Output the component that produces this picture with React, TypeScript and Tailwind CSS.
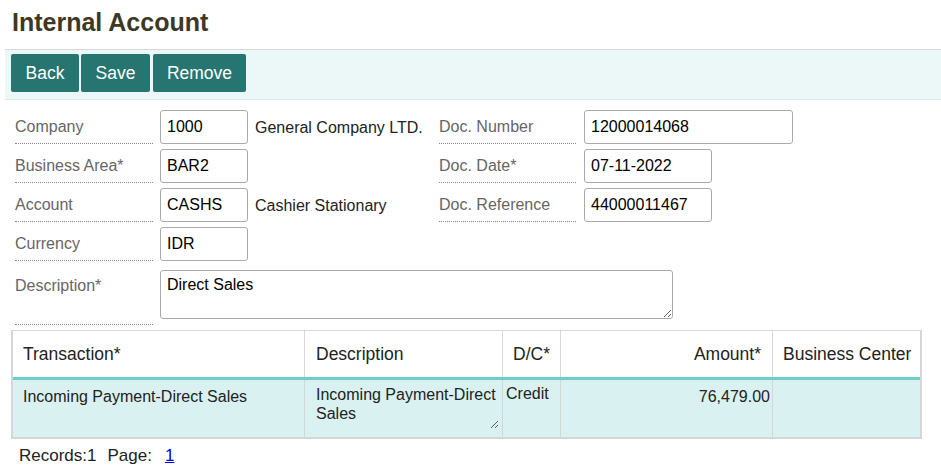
import React from 'react';

const labelCls =
  'flex items-center w-[137px] h-[34px] border-b border-dotted border-[#8a8a8a] text-[16px] text-[#666]';
const inputCls =
  'h-[34px] border border-[#aaa] rounded-[3px] px-[6px] text-[16px] text-black bg-white outline-none';

function Field({ label, value, width }: { label: string; value: string; width: number }) {
  return (
    <>
      <div className={labelCls}>{label}</div>
      <input readOnly value={value} className={inputCls + ' ml-[8px]'} style={{ width }} />
    </>
  );
}

export default function App() {
  return (
    <div
      className="w-[941px] h-[471px] bg-white overflow-hidden"
      style={{ fontFamily: '"Liberation Sans", Arial, sans-serif' }}
    >
      <h1 className="pl-[12px] pt-[8px] text-[25px] font-bold leading-[normal] text-[#3d3823]">
        Internal Account
      </h1>

      {/* toolbar */}
      <div className="ml-[5px] mt-[12px] h-[51px] border-t border-b border-t-[#d9d9d9] border-b-[#d4ecec] bg-[#ecf8f8] flex items-start gap-[2px] pl-[6px] pt-[4px]">
        <button className="w-[68px] h-[38px] rounded-[2px] bg-[#277571] text-white text-[17.5px]">Back</button>
        <button className="w-[69px] h-[38px] rounded-[2px] bg-[#277571] text-white text-[17.5px]">Save</button>
        <button className="w-[93px] h-[38px] ml-[1px] rounded-[2px] bg-[#277571] text-white text-[17.5px]">
          Remove
        </button>
      </div>

      {/* form */}
      <div className="pl-[15px] pt-[10px] flex flex-col gap-[5px]">
        <div className="flex">
          <div className={labelCls + ' w-[138px]'}>Company</div>
          <input readOnly value="1000" className={inputCls + ' ml-[7px] w-[88px]'} />
          <div className="ml-[7px] w-[184px] pt-[6px] text-[16px] text-[#222]">General Company LTD.</div>
          <Field label="Doc. Number" value="12000014068" width={209} />
        </div>
        <div className="flex">
          <div className={labelCls + ' w-[138px]'}>Business Area*</div>
          <input readOnly value="BAR2" className={inputCls + ' ml-[7px] w-[88px]'} />
          <div className="ml-[7px] w-[184px]" />
          <Field label="Doc. Date*" value="07-11-2022" width={128} />
        </div>
        <div className="flex">
          <div className={labelCls + ' w-[138px]'}>Account</div>
          <input readOnly value="CASHS" className={inputCls + ' ml-[7px] w-[88px]'} />
          <div className="ml-[7px] w-[184px] pt-[6px] text-[16px] text-[#222]">Cashier Stationary</div>
          <Field label="Doc. Reference" value="44000011467" width={128} />
        </div>
        <div className="flex">
          <div className={labelCls + ' w-[138px]'}>Currency</div>
          <input readOnly value="IDR" className={inputCls + ' ml-[7px] w-[88px]'} />
        </div>
        <div className="flex items-start">
          <div className="w-[138px] h-[59px] pt-[11px] border-b border-dotted border-[#8a8a8a] text-[16px] leading-[normal] text-[#666]">
            Description*
          </div>
          <textarea
            readOnly
            value="Direct Sales"
            className="ml-[7px] mt-[4px] w-[513px] h-[49px] border border-[#aaa] rounded-[3px] px-[6px] py-[2px] text-[16px] text-black outline-none resize"
          />
        </div>
      </div>

      {/* grid */}
      <div className="ml-[11px] mt-[5px] w-[911px] border-t border-l-2 border-r-2 border-b-2 border-[#d6d6d6] text-[#222]">
        <div className="flex h-[49px] border-b-[3px] border-[#6ccfca] text-[17.5px]">
          <div className="w-[292px] border-r border-[#d6d6d6] pl-[10px] flex items-center">Transaction*</div>
          <div className="w-[198px] border-r border-[#d6d6d6] pl-[11px] flex items-center">Description</div>
          <div className="w-[58px] border-r border-[#d6d6d6] pl-[10px] flex items-center">D/C*</div>
          <div className="w-[212px] border-r border-[#d6d6d6] pr-[11px] flex items-center justify-end">Amount*</div>
          <div className="flex-1 pl-[10px] flex items-center">Business Center</div>
        </div>
        <div className="flex h-[57px] bg-[#daf1f2] text-[16px] leading-[normal]">
          <div className="w-[292px] border-r border-[#d6d6d6] pl-[10px] pt-[8px]">Incoming Payment-Direct Sales</div>
          <div className="w-[198px] border-r border-[#d6d6d6]">
            <textarea
              readOnly
              value="Incoming Payment-Direct Sales"
              className="ml-[8px] mt-[3px] w-[186px] h-[46px] px-[3px] py-[2px] text-[16px] leading-[19px] text-[#222] bg-transparent border-0 outline-none resize overflow-hidden"
            />
          </div>
          <div className="w-[58px] border-r border-[#d6d6d6] pl-[3px] pt-[5px]">Credit</div>
          <div className="w-[212px] border-r border-[#d6d6d6] pr-[2px] pt-[8px] text-right">76,479.00</div>
          <div className="flex-1" />
        </div>
      </div>

      <div className="pl-[19px] mt-[7px] text-[17px] leading-[normal] text-[#222]">
        <span>Records:1</span>
        <span className="ml-[11px]">Page:</span>
        <a href="#" className="ml-[13px] text-[#0000ee] underline">
          1
        </a>
      </div>
    </div>
  );
}
